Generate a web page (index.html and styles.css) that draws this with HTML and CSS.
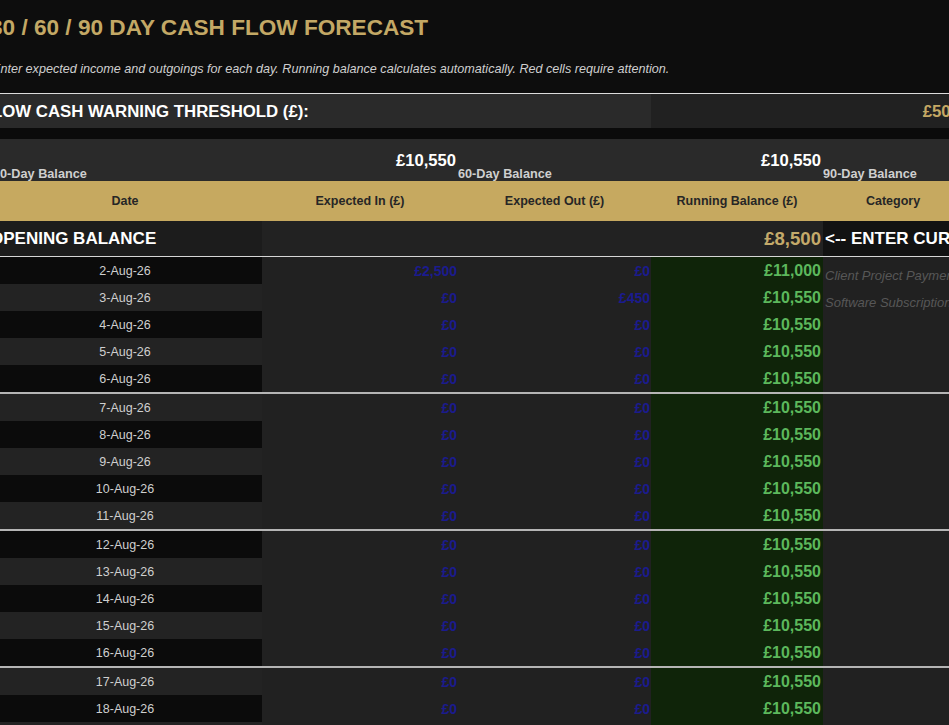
FILE: index.html
```html
<!DOCTYPE html>
<html>
<head>
<meta charset="utf-8">
<link rel="stylesheet" href="styles.css">
</head>
<body>
<div class="sheet">
  <div class="title-block">
    <h1 class="title">30 / 60 / 90 DAY CASH FLOW FORECAST</h1>
    <p class="subtitle">Enter expected income and outgoings for each day. Running balance calculates automatically. Red cells require attention.</p>
  </div>
  <table class="grid">
    <colgroup>
      <col class="c-a"><col class="c-b"><col class="c-c"><col class="c-d"><col class="c-e">
    </colgroup>
    <tr class="r-threshold">
      <td colspan="3" class="th-label">LOW CASH WARNING THRESHOLD (£):</td>
      <td colspan="2" class="th-value">£500</td>
    </tr>
    <tr class="r-gap"><td colspan="5"></td></tr>
    <tr class="r-summary">
      <td class="sum-label">30-Day Balance</td>
      <td class="sum-value">£10,550</td>
      <td class="sum-label">60-Day Balance</td>
      <td class="sum-value">£10,550</td>
      <td class="sum-label">90-Day Balance</td>
    </tr>
    <tr class="r-head">
      <td>Date</td>
      <td>Expected In (£)</td>
      <td>Expected Out (£)</td>
      <td>Running Balance (£)</td>
      <td>Category</td>
    </tr>
    <tr class="r-open">
      <td class="open-label">OPENING BALANCE</td>
      <td class="open-mid"></td>
      <td class="open-mid"></td>
      <td class="open-value">£8,500</td>
      <td class="open-note">&lt;-- ENTER CURRENT BALANCE</td>
    </tr>
    <tr class="row dark"><td class="date">2-Aug-26</td><td class="amt">£2,500</td><td class="amt">£0</td><td class="bal">£11,000</td><td class="cat">Client Project Payment</td></tr>
    <tr class="row light"><td class="date">3-Aug-26</td><td class="amt">£0</td><td class="amt">£450</td><td class="bal">£10,550</td><td class="cat">Software Subscriptions</td></tr>
    <tr class="row dark"><td class="date">4-Aug-26</td><td class="amt">£0</td><td class="amt">£0</td><td class="bal">£10,550</td><td class="cat"></td></tr>
    <tr class="row light"><td class="date">5-Aug-26</td><td class="amt">£0</td><td class="amt">£0</td><td class="bal">£10,550</td><td class="cat"></td></tr>
    <tr class="row dark"><td class="date">6-Aug-26</td><td class="amt">£0</td><td class="amt">£0</td><td class="bal">£10,550</td><td class="cat"></td></tr>
    <tr class="row light sep"><td class="date">7-Aug-26</td><td class="amt">£0</td><td class="amt">£0</td><td class="bal">£10,550</td><td class="cat"></td></tr>
    <tr class="row dark"><td class="date">8-Aug-26</td><td class="amt">£0</td><td class="amt">£0</td><td class="bal">£10,550</td><td class="cat"></td></tr>
    <tr class="row light"><td class="date">9-Aug-26</td><td class="amt">£0</td><td class="amt">£0</td><td class="bal">£10,550</td><td class="cat"></td></tr>
    <tr class="row dark"><td class="date">10-Aug-26</td><td class="amt">£0</td><td class="amt">£0</td><td class="bal">£10,550</td><td class="cat"></td></tr>
    <tr class="row light"><td class="date">11-Aug-26</td><td class="amt">£0</td><td class="amt">£0</td><td class="bal">£10,550</td><td class="cat"></td></tr>
    <tr class="row dark sep"><td class="date">12-Aug-26</td><td class="amt">£0</td><td class="amt">£0</td><td class="bal">£10,550</td><td class="cat"></td></tr>
    <tr class="row light"><td class="date">13-Aug-26</td><td class="amt">£0</td><td class="amt">£0</td><td class="bal">£10,550</td><td class="cat"></td></tr>
    <tr class="row dark"><td class="date">14-Aug-26</td><td class="amt">£0</td><td class="amt">£0</td><td class="bal">£10,550</td><td class="cat"></td></tr>
    <tr class="row light"><td class="date">15-Aug-26</td><td class="amt">£0</td><td class="amt">£0</td><td class="bal">£10,550</td><td class="cat"></td></tr>
    <tr class="row dark"><td class="date">16-Aug-26</td><td class="amt">£0</td><td class="amt">£0</td><td class="bal">£10,550</td><td class="cat"></td></tr>
    <tr class="row light sep"><td class="date">17-Aug-26</td><td class="amt">£0</td><td class="amt">£0</td><td class="bal">£10,550</td><td class="cat"></td></tr>
    <tr class="row dark"><td class="date">18-Aug-26</td><td class="amt">£0</td><td class="amt">£0</td><td class="bal">£10,550</td><td class="cat"></td></tr>
    <tr class="row light"><td class="date">19-Aug-26</td><td class="amt">£0</td><td class="amt">£0</td><td class="bal">£10,550</td><td class="cat"></td></tr>
  </table>
</div>
</body>
</html>
```
FILE: styles.css
```css
html, body {
  margin: 0;
  padding: 0;
  background: #0d0d0d;
  overflow: hidden;
  height: 725px;
}
body {
  font-family: "Liberation Sans", Arial, sans-serif;
  color: #ddd;
}
.sheet {
  margin-left: -12px;
  width: 975px;
}
.title-block {
  height: 93px;
  box-sizing: border-box;
  padding-top: 15px;
}
.title {
  margin: 0;
  padding-left: 2px;
  font-size: 22.6px;
  font-weight: bold;
  color: #c3a865;
  line-height: 26px;
}
.subtitle {
  margin: 21px 0 0;
  padding-left: 4px;
  font-size: 12.6px;
  font-style: italic;
  color: #cfcfcf;
  line-height: 14px;
}
.grid {
  border-collapse: separate;
  border-spacing: 0;
  table-layout: fixed;
  width: 975px;
}
.c-a { width: 274px; }
.c-b { width: 196px; }
.c-c { width: 193px; }
.c-d { width: 172px; }
.c-e { width: 140px; }
.grid td {
  box-sizing: border-box;
  padding: 0 3px;
  white-space: nowrap;
  overflow: hidden;
}
/* threshold */
.r-threshold td {
  height: 35px;
  border-top: 1px solid #dcdcdc;
  font-size: 16.8px;
  font-weight: bold;
  padding-top: 2px;
}
.th-label {
  background: #2a2a2a;
  color: #fff;
  padding-left: 4px !important;
}
.th-value {
  background: #212121;
  color: #c4a864;
  text-align: right;
}
.r-gap td {
  height: 11px;
  background: #0b0b0b;
}
/* summary */
.r-summary td {
  height: 42px;
  background: #2a2a2a;
}
.sum-label {
  vertical-align: bottom;
  font-size: 12.7px;
  font-weight: bold;
  color: #cfcfcf;
  padding: 0 1px 0 0 !important;
  line-height: 14px;
}
.r-summary .sum-label:first-child {
  padding-left: 5px !important;
}
.sum-value {
  vertical-align: middle;
  text-align: right;
  font-size: 16.6px;
  font-weight: bold;
  color: #fff;
  padding-right: 2px !important;
  padding-top: 1px !important;
}
/* header */
.r-head td {
  height: 40px;
  background: #c6a960;
  color: #262626;
  font-size: 12.5px;
  font-weight: bold;
  text-align: center;
}
/* opening */
.r-open td {
  height: 36px;
  border-bottom: 1px solid #d6d6d6;
  font-weight: bold;
}
.open-label {
  background: #1c1c1c;
  color: #fff;
  font-size: 17px;
  padding-left: 2px !important;
}
.open-mid {
  background: #222;
}
.open-value {
  background: #222;
  color: #c4aa6a;
  font-size: 18.6px;
  text-align: right;
  padding-right: 2px !important;
}
.open-note {
  background: #121212;
  color: #fff;
  font-size: 17px;
  padding-left: 2px !important;
}
/* data rows */
.row td {
  height: 27px;
  background: #212121;
}
.row.sep td {
  border-top: 2px solid #b5b5b5;
  height: 29px;
}
.row.dark .date { background: #0b0b0b; }
.row.light .date { background: #232323; }
.date {
  text-align: center;
  font-size: 12.5px;
  color: #cfcfcf;
}
.amt {
  text-align: right;
  font-size: 14px;
  font-weight: bold;
  color: #1b1b8e;
  padding-right: 1px !important;
}
.grid .bal {
  background: #0f2409;
  text-align: right;
  font-size: 16px;
  font-weight: bold;
  color: #5cb85c;
  padding-right: 2px !important;
}
.cat {
  font-size: 13px;
  font-style: italic;
  color: #575757;
  vertical-align: bottom;
  padding: 0 2px 1px !important;
}
```
